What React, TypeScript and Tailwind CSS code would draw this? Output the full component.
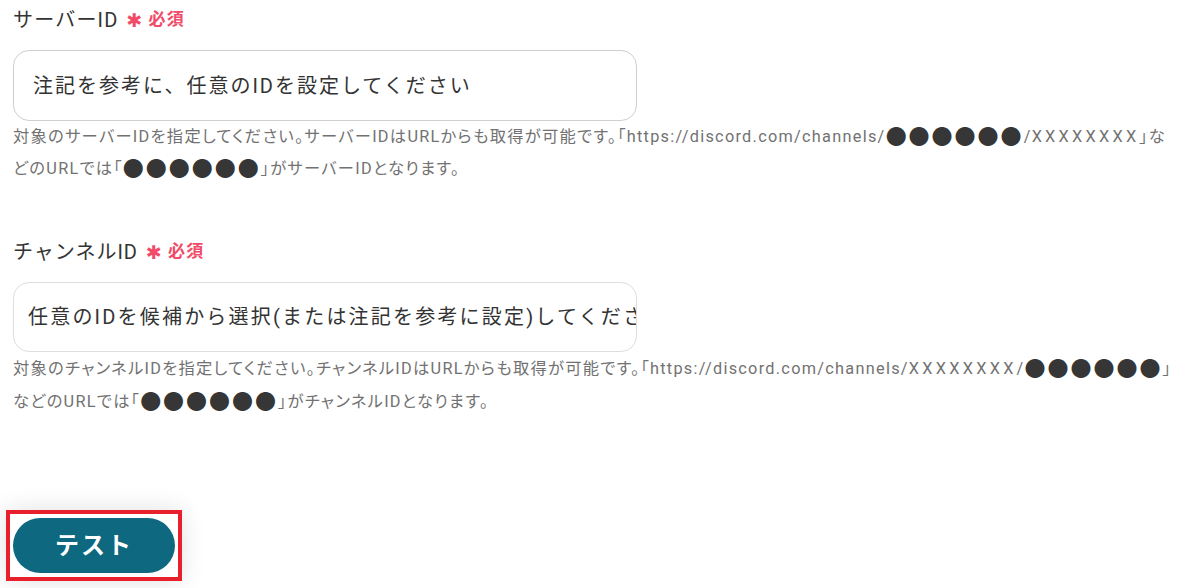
import React from 'react';

const jp = "font-['Roboto','Noto_Sans_CJK_JP',sans-serif]";

const Dots: React.FC = () => (
  <span className="text-[21px] leading-none text-[#363636] align-[-2px] tracking-[2px]">●●●●●●</span>
);

const Xs: React.FC = () => <span className="tracking-[0.2em]">XXXXXXXX</span>;

const Required: React.FC = () => (
  <span className="ml-2 inline-flex items-center text-[#f04b69] tracking-normal">
    <span className="text-[19px] font-bold leading-none font-['DejaVu_Sans',sans-serif]">✱</span>
    <span className="ml-[6px] text-[17px] font-bold tracking-[0.08em]">必須</span>
  </span>
);

const App: React.FC = () => {
  return (
    <div className={`${jp} bg-white w-[1192px] h-[588px] overflow-hidden px-[13px] pt-[8px] text-[#333] tracking-[0.08em]`}>
      {/* サーバーID */}
      <div className="flex items-center h-6 text-[20px] tracking-[0.06em]">
        サーバーID
        <Required />
      </div>
      <div className="mt-[18px] w-[624px] h-[71px] rounded-2xl border border-[#cfcfcf] flex items-center px-[19px] text-[20px] tracking-[0.1em] whitespace-nowrap overflow-hidden">
        注記を参考に、任意のIDを設定してください
      </div>
      <p className="text-[16.3px] leading-[32px] text-[#727272] [font-feature-settings:'palt']">
        対象のサーバーIDを指定してください。サーバーIDはURLからも取得が可能です。「https://discord.com/channels/<Dots />/<Xs />」などのURLでは「<Dots />」がサーバーIDとなります。
      </p>

      {/* チャンネルID */}
      <div className="mt-[55px] flex items-center h-6 text-[20px] tracking-[0.05em]">
        チャンネルID
        <Required />
      </div>
      <div className="mt-[18px] w-[624px] h-[70px] rounded-2xl border border-[#dedede] flex items-center px-[14px] text-[20px] tracking-[0.11em] whitespace-nowrap overflow-hidden">
        任意のIDを候補から選択(または注記を参考に設定)してください
      </div>
      <p className="text-[16.3px] leading-[33px] text-[#727272] [font-feature-settings:'palt']">
        対象のチャンネルIDを指定してください。チャンネルIDはURLからも取得が可能です。「https://discord.com/channels/<Xs />/<Dots />」などのURLでは「<Dots />」がチャンネルIDとなります。
      </p>

      {/* テスト */}
      <div className="mt-[92px] -ml-[7px] inline-block border-[4px] border-[#e8202b] p-[3px] py-[4px] shadow-[0_0_24px_rgba(0,0,0,0.12)]">
        <button className="block w-[162px] h-[55px] rounded-full bg-[#0d6880] text-white text-[24px] font-bold tracking-[2px]">
          テスト
        </button>
      </div>
    </div>
  );
};

export default App;
